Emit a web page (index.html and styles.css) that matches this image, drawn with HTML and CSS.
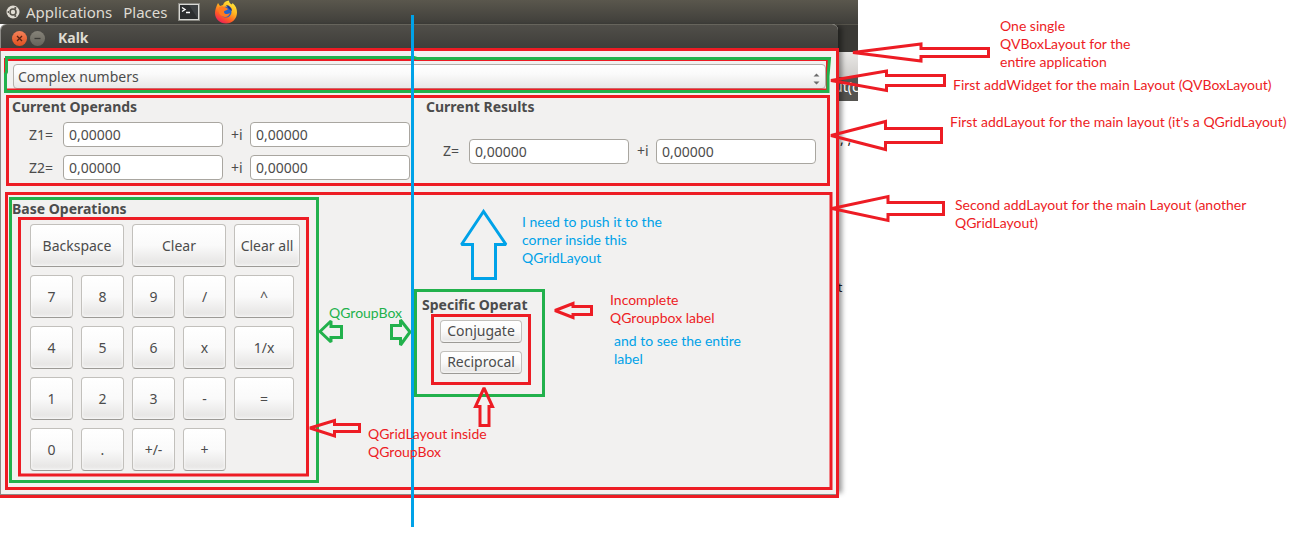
FILE: index.html
```html
<!DOCTYPE html>
<html lang="en">

<head>
    <meta charset="UTF-8">
    <meta name="viewport" content="width=device-width, initial-scale=1.0">
    <title>Kalk</title>
    <link rel="stylesheet" href="styles.css">
</head>

<body>
    <div class="desktop">
        <!-- Top panel -->
        <nav class="panel">
            <svg class="panel-logo" width="14" height="14" viewBox="0 0 14 14">
                <circle cx="7" cy="7" r="6.500" fill="#dfdbd2" />
                <circle cx="7" cy="7" r="3" fill="none" stroke="#55524a" stroke-width="1.6" />
                <path d="M2 7h2M9 3.2l1-1.7M9 10.8l1 1.7" stroke="#dfdbd2" stroke-width="1.4" />
                <circle cx="2.6" cy="7" r="1.1" fill="#55524a" />
                <circle cx="9.3" cy="3" r="1.1" fill="#55524a" />
                <circle cx="9.3" cy="11" r="1.1" fill="#55524a" />
            </svg>
            <a href="#">Applications</a>
            <a href="#">Places</a>
            <svg class="panel-terminal" width="22" height="18" viewBox="0 0 22 18">
                <rect x="0.5" y="0.5" width="21" height="17" fill="#d8d8d4" stroke="#8a8983" />
                <rect x="2" y="2" width="18" height="14" fill="#2c2e2f" />
                <path d="M11 2h9v14z" fill="#3d4042" />
                <path d="M4 4.5l3 2-3 2M8 9.5h4" fill="none" stroke="#fff" stroke-width="1.4" />
            </svg>
            <svg class="panel-firefox" width="24" height="24" viewBox="0 0 24 24">
                <defs>
                    <linearGradient id="fox" x1="0.8" y1="0" x2="0.2" y2="1">
                        <stop offset="0" stop-color="#fff23f" />
                        <stop offset="0.4" stop-color="#ffb01f" />
                        <stop offset="0.7" stop-color="#ff5a26" />
                        <stop offset="1" stop-color="#ee1664" />
                    </linearGradient>
                </defs>
                <path d="M4 3l2 3 3-1c1-3 3-4 6-4.500 0 2 1 3 3 4l.5-1.500C22 6 23 9 23 12.500 23 19 18 23.500 12 23.500S1 19 1 13c0-3 1-6 3-10z" fill="url(#fox)" />
                <circle cx="12" cy="12" r="5.500" fill="#2563c9" />
                <path d="M5 7c2-1 4-1 6 0l3 2c-1 2-4 1-4 3s3 3 6 1c-1 4-5 5-8 3-3-1-4-5-3-9z" fill="#ff7a22" />
                <path d="M12 5c3 0 6 3 6 6l-3-2z" fill="#18318c" />
            </svg>
        </nav>

        <!-- Part of the editor that shows behind the window -->
        <div class="behind">
            <div class="behind-title"></div>
            <div class="behind-toolbar"></div>
            <div class="behind-tab">ut(c</div>
            <span class="behind-code behind-code-first">, ,</span>
            <span class="behind-code behind-code-second">t</span>
        </div>

        <!-- Calculator window -->
        <main class="window">
            <header class="titlebar">
                <button class="win-btn win-close" type="button" aria-label="Close">
                    <svg width="15" height="15" viewBox="0 0 15 15"><path d="M5 5l5 5M10 5l-5 5" stroke="#5a2414" stroke-width="1.300" /></svg>
                </button>
                <button class="win-btn win-min" type="button" aria-label="Minimize">
                    <svg width="15" height="15" viewBox="0 0 15 15"><path d="M4.500 7.500h6" stroke="#3c3b37" stroke-width="1.300" /></svg>
                </button>
                <h1>Kalk</h1>
            </header>

            <div class="content">
                <div class="mode">
                    <select aria-label="Number type">
                        <option>Complex numbers</option>
                    </select>
                    <svg class="mode-arrows" width="7" height="12" viewBox="0 0 7 12">
                        <path d="M0.500 3.500l3-3 3 3zM0.500 8.500l3 3 3-3z" fill="#6b6b6b" />
                    </svg>
                </div>

                <div class="values">
                    <section>
                        <h2>Current Operands</h2>
                        <div class="fields operands">
                            <label for="z1re">Z1=</label>
                            <input type="text" id="z1re" value="0,00000">
                            <label for="z1im">+i</label>
                            <input type="text" id="z1im" value="0,00000">
                            <label for="z2re">Z2=</label>
                            <input type="text" id="z2re" value="0,00000">
                            <label for="z2im">+i</label>
                            <input type="text" id="z2im" value="0,00000">
                        </div>
                    </section>
                    <section class="results-group">
                        <h2>Current Results</h2>
                        <div class="fields results">
                            <label for="zre">Z=</label>
                            <input type="text" id="zre" value="0,00000">
                            <label for="zim">+i</label>
                            <input type="text" id="zim" value="0,00000">
                        </div>
                    </section>
                </div>

                <div class="operations">
                    <section>
                        <h2>Base Operations</h2>
                        <div class="keypad">
                            <button type="button" class="key wide">Backspace</button>
                            <button type="button" class="key wide">Clear</button>
                            <button type="button" class="key">Clear all</button>
                            <button type="button" class="key">7</button>
                            <button type="button" class="key">8</button>
                            <button type="button" class="key">9</button>
                            <button type="button" class="key">/</button>
                            <button type="button" class="key side">^</button>
                            <button type="button" class="key">4</button>
                            <button type="button" class="key">5</button>
                            <button type="button" class="key">6</button>
                            <button type="button" class="key">x</button>
                            <button type="button" class="key side">1/x</button>
                            <button type="button" class="key">1</button>
                            <button type="button" class="key">2</button>
                            <button type="button" class="key">3</button>
                            <button type="button" class="key">-</button>
                            <button type="button" class="key side">=</button>
                            <button type="button" class="key">0</button>
                            <button type="button" class="key">.</button>
                            <button type="button" class="key">+/-</button>
                            <button type="button" class="key">+</button>
                        </div>
                    </section>
                    <section class="specific">
                        <h2>Specific Operat</h2>
                        <div class="specific-keys">
                            <button type="button" class="key small">Conjugate</button>
                            <button type="button" class="key small">Reciprocal</button>
                        </div>
                    </section>
                </div>
            </div>
        </main>
    </div>

    <!-- Frames and arrows drawn over the window -->
    <svg class="marks" width="1296" height="556" viewBox="0 0 1296 556">
        <g class="red">
            <path d="M0 49.500H837.500V496.500H0" />
            <path d="M5.500 59.500H827.500V90H5.500z" />
            <path d="M7.500 96.500H828.500V184.500H7.500z" />
            <path d="M6.500 193.500H831V488.500H6.500z" />
            <path d="M19.500 218.500H307.500V475H19.500z" />
            <path d="M432.500 315.500H529.500V383.500H432.500z" />
        </g>
        <g class="green">
            <path d="M6.500 57V72L5.500 74V91.500H828V76L829.500 58.500H417L414 57.500H5" />
            <path d="M10.500 198.500H317.500V481.500H10.500z" />
            <path d="M415.500 290.500H543.500V395.500H415.500z" />
            <path d="M320 331.500L331 321V326.500H341.500V337.500H331V342z" />
            <path d="M410 332L400.500 320V325.500H391.500V338.500H400.500V345z" />
        </g>
        <g class="red">
            <path d="M853 52.500L921 44V48.500H988.500V56.500H921V61z" />
            <path d="M831 80.500L886.500 71V75.500H944.500V85.500H886.500V90.500z" />
            <path d="M831 135.500L885.500 121.500V128.500H941.500V142.500H885.500V149.500z" />
            <path d="M832 208.500L888 196.500V202.500H943.500V214.500H888V220.500z" />
            <path d="M555 310.500L573 303.500V306.500H591.500V314.500H573V317.500z" />
            <path d="M310 428L334.500 420.500V424.500H359.500V431.500H334.500V436z" />
            <path d="M484 388L475.500 406.500H480V425.500H489V406.500H492.500z" />
        </g>
        <g class="blue">
            <path d="M412.500 15V527" />
            <path d="M483.500 211.500L461.500 244.500H472.500V278.500H495.500V244.500H506z" />
        </g>
    </svg>

    <!-- Notes -->
    <p class="note red-note note-vbox">One single<br>QVBoxLayout for the<br>entire application</p>
    <p class="note red-note note-widget">First addWidget for the main Layout (QVBoxLayout)</p>
    <p class="note red-note note-first">First addLayout for the main layout (it's a QGridLayout)</p>
    <p class="note red-note note-second">Second addLayout for the main Layout (another<br>QGridLayout)</p>
    <p class="note blue-note note-push">I need to push it to the<br>corner inside this<br>QGridLayout</p>
    <p class="note red-note note-label">Incomplete<br>QGroupbox label</p>
    <p class="note blue-note note-entire">and to see the entire<br>label</p>
    <p class="note green-note note-group">QGroupBox</p>
    <p class="note red-note note-inside">QGridLayout inside<br>QGroupBox</p>
</body>

</html>
```

FILE: styles.css
```css
/* General styles */
* {
    box-sizing: border-box;
}

body {
    position: relative;
    margin: 0;
    min-height: 556px;
    background: #fff;
    color: #4c4c4c;
    font-family: "Noto Sans", "Open Sans", sans-serif;
    font-size: 14px;
    line-height: 20px;
    overflow: hidden;
}

h1, h2, p {
    margin: 0;
}

h2 {
    font-size: 14px;
    line-height: 20px;
    white-space: nowrap;
}

button, input, select {
    font: inherit;
    color: inherit;
}

/* Desktop and top panel */
.desktop {
    position: relative;
    max-width: 858px;
}

.panel {
    display: flex;
    align-items: center;
    height: 24px;
    padding-left: 6px;
    background: linear-gradient(#5a574d, #3f3e3a);
}

.panel a {
    margin-right: 11px;
    color: #dfdbd2;
    font-size: 15px;
    text-decoration: none;
}

.panel-logo {
    margin-right: 6px;
}

.panel-terminal {
    margin-right: 14px;
}

/* Window behind */
.behind {
    position: absolute;
    top: 24px;
    right: 0;
    width: 60px;
}

.behind-title {
    height: 28px;
    background: #3a3935;
    border-top: 1px solid #55534b;
}

.behind-toolbar {
    height: 25px;
    background: linear-gradient(#e9e8e6, #cfcdca);
}

.behind-tab {
    height: 24px;
    padding-left: 36px;
    background: #555450;
    color: #fff;
    white-space: nowrap;
    overflow: hidden;
}

.behind-code {
    position: absolute;
    left: 42px;
    color: #222;
    line-height: 16px;
}

.behind-code-first {
    top: 107px;
}

.behind-code-second {
    top: 256px;
    left: 40px;
    font-size: 12px;
}

/* Calculator window */
.window {
    position: relative;
    max-width: 838px;
    background: #f2f1f0;
    border-left: 1px solid #8d8b87;
    border-bottom: 1px solid #8d8b87;
    border-radius: 6px 6px 0 0;
    box-shadow: 6px 0 5px -2px rgba(0, 0, 0, 0.4);
}

.titlebar {
    display: flex;
    align-items: center;
    height: 27px;
    padding-left: 11px;
    background: linear-gradient(#504e49, #3d3c38);
    border-top: 1px solid #66645c;
    border-radius: 6px 6px 0 0;
}

.titlebar h1 {
    margin-left: 10px;
    color: #dfdbd2;
    font-size: 14px;
}

.win-btn {
    display: block;
    width: 15px;
    height: 15px;
    margin-right: 3px;
    padding: 0;
    border: 0;
    border-radius: 50%;
}

.win-btn svg {
    display: block;
}

.win-close {
    background: linear-gradient(#f5825a, #e0501f);
}

.win-min {
    background: linear-gradient(#868379, #66645c);
}

.content {
    padding: 13px 11px 23px;
}

/* Drop-down */
.mode {
    position: relative;
    margin: 0 1px 8px;
}

.mode select {
    display: block;
    width: 100%;
    height: 25px;
    padding: 0 4px;
    appearance: none;
    background: linear-gradient(#fff, #fafafa 40%, #e8e7e6);
    border: 1px solid #b3b0ab;
    border-radius: 4px;
}

.mode-arrows {
    position: absolute;
    top: 9px;
    right: 6px;
}

/* Operands and results */
.values {
    display: grid;
    grid-template-columns: 398fr 390fr;
    gap: 16px;
    padding-right: 11px;
}

.fields {
    display: grid;
    gap: 8px;
    align-items: center;
    padding: 5px 0 0 17px;
}

.operands {
    grid-template-columns: 26px 1fr 11px 1fr;
}

.results {
    grid-template-columns: 18px 1fr 11px 1fr;
}

.results-group {
    display: flex;
    flex-direction: column;
}

.results-group .fields {
    flex: 1;
}

.fields label {
    white-space: nowrap;
}

.fields input {
    width: 100%;
    height: 25px;
    padding: 0 5px;
    background: #fff;
    border: 1px solid #a9a6a0;
    border-radius: 4px;
}

/* Operations */
.operations {
    display: grid;
    grid-template-columns: 410fr 405fr;
    margin-top: 19px;
}

.keypad {
    display: grid;
    grid-template-columns: 43px 43px 43px 43px 66px;
    gap: 8px;
    padding: 5px 0 0 18px;
}

.key {
    height: 43px;
    padding: 0;
    background: linear-gradient(#fff, #fafafa 50%, #e8e7e6 90%, #eeedec);
    border: 1px solid #c2c0bc;
    border-bottom-color: #9c9a96;
    border-radius: 4px;
    box-shadow: inset 0 0 3px #fff;
    white-space: nowrap;
}

.wide {
    grid-column: span 2;
}

.side {
    width: 60px;
}

.specific {
    align-self: center;
    padding-bottom: 2px;
}

.specific-keys {
    display: grid;
    grid-template-columns: 82px;
    gap: 8px;
    padding: 5px 0 0 18px;
}

.small {
    height: 23px;
    line-height: 20px;
}

/* Frames and arrows */
.marks {
    position: absolute;
    top: 0;
    left: 0;
}

.marks path {
    fill: none;
    stroke-width: 3;
    stroke-miterlimit: 2;
}

.red {
    stroke: #ed1c24;
}

.green {
    stroke: #22b14c;
}

.blue {
    stroke: #00a2e8;
}

/* Notes */
.note {
    position: absolute;
    font-family: Lato, sans-serif;
    font-size: 14px;
    line-height: 18px;
    white-space: nowrap;
}

.red-note {
    color: #ed1c24;
}

.green-note {
    color: #22b14c;
}

.blue-note {
    color: #00a2e8;
}

.note-vbox {
    top: 17px;
    left: 1000px;
}

.note-widget {
    top: 76px;
    left: 953px;
}

.note-first {
    top: 113px;
    left: 950px;
}

.note-second {
    top: 196px;
    left: 955px;
}

.note-push {
    top: 213px;
    left: 522px;
}

.note-label {
    top: 291px;
    left: 610px;
}

.note-entire {
    top: 332px;
    left: 614px;
}

.note-group {
    top: 304px;
    left: 329px;
}

.note-inside {
    top: 425px;
    left: 368px;
}
```
